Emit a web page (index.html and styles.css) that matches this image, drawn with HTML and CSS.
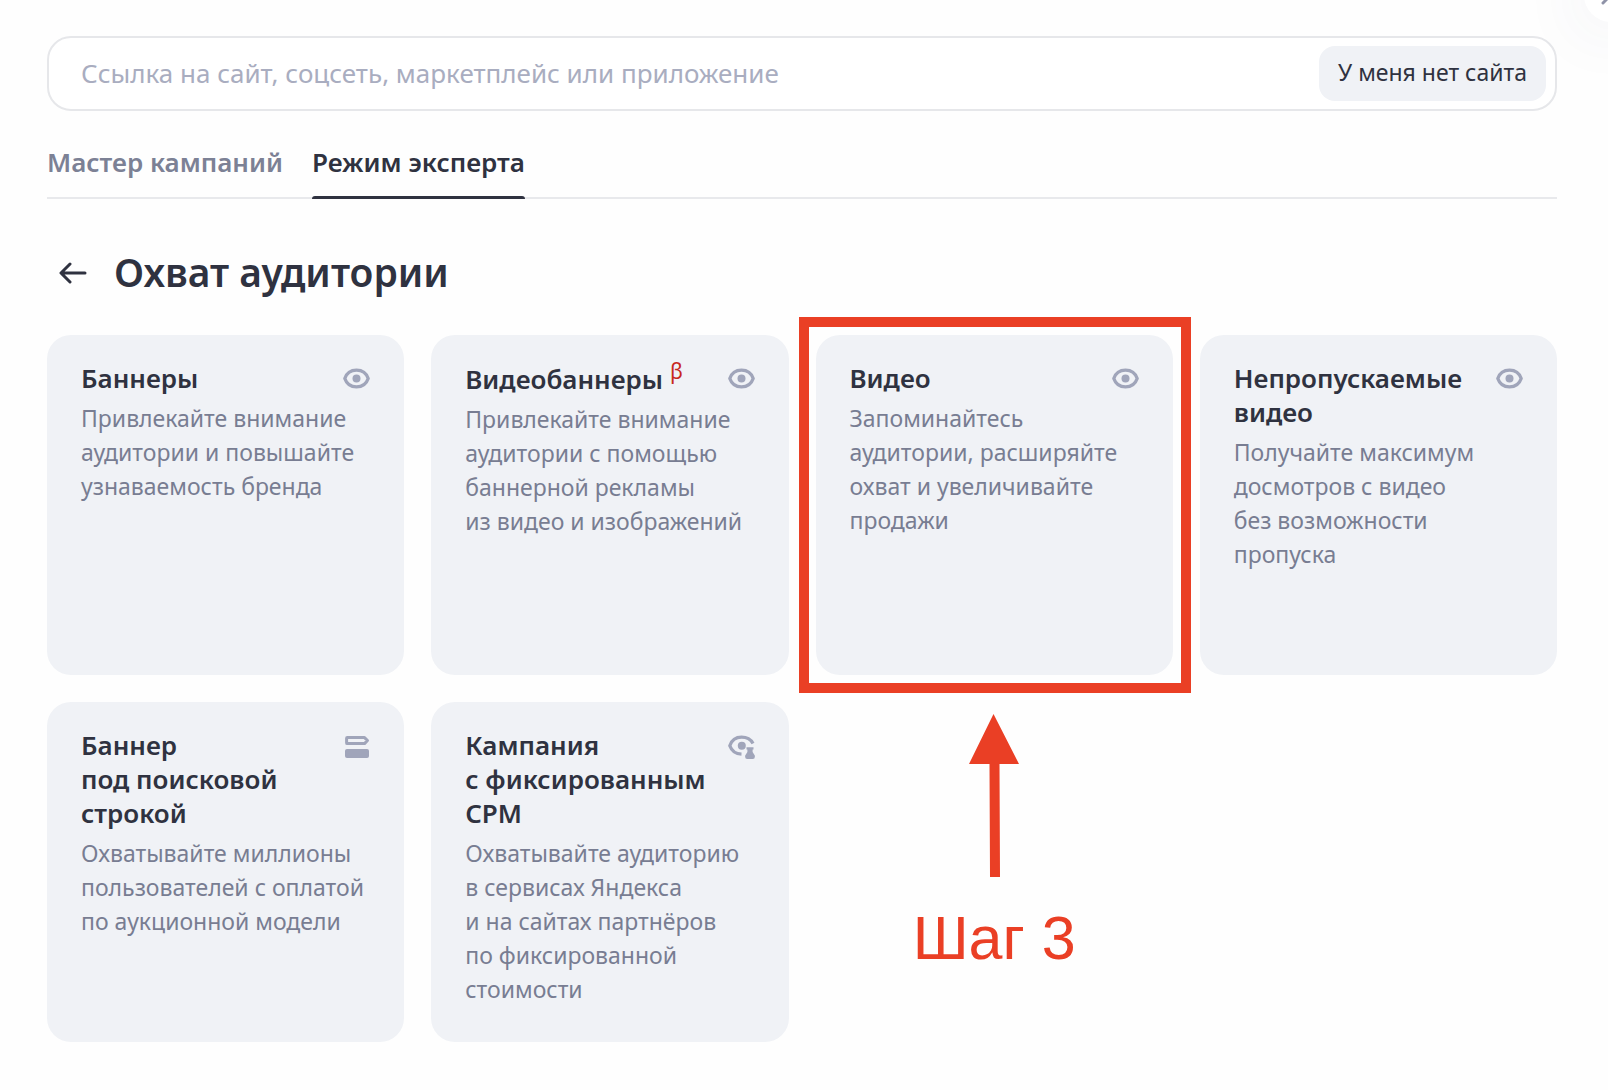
FILE: index.html
```html
<!DOCTYPE html>
<html lang="ru">
<head>
<meta charset="utf-8">
<meta name="viewport" content="width=device-width, initial-scale=1">
<title>Охват аудитории</title>
<link rel="stylesheet" href="styles.css">
</head>
<body>
<svg class="sprite" aria-hidden="true">
  <symbol id="eye" viewBox="0 0 27 21">
    <path d="M13.500 2.100C7.800 2.100 3.600 5.200 1.800 10.500C3.600 15.800 7.800 18.900 13.500 18.900S23.400 15.800 25.200 10.500C23.400 5.200 19.200 2.100 13.500 2.100Z" fill="none" stroke="currentColor" stroke-width="3.300" stroke-linejoin="round"/>
    <circle cx="13.500" cy="10.500" r="4" fill="currentColor"/>
  </symbol>
</svg>
<div class="page">
  <button class="close" type="button" aria-label="Закрыть">
    <svg width="20" height="20" viewBox="0 0 20 20"><path d="M2 2l16 16M18 2L2 18" fill="none" stroke="currentColor" stroke-width="3" stroke-linecap="round"/></svg>
  </button>
  <main class="content">
    <form class="search">
      <input class="search-input" type="text" aria-label="Ссылка" placeholder="Ссылка на сайт, соцсеть, маркетплейс или приложение">
      <button class="search-button" type="button">У меня нет сайта</button>
    </form>
    <nav class="tabs">
      <a class="tab" href="#wizard">Мастер кампаний</a>
      <a class="tab tab-active" href="#expert" aria-current="page">Режим эксперта</a>
    </nav>
    <header class="heading">
      <button class="back" type="button" aria-label="Назад">
        <svg width="28" height="22" viewBox="0 0 28 22"><path d="M26 11H2.500M11 2L2 11l9 9" fill="none" stroke="currentColor" stroke-width="3" stroke-linecap="round" stroke-linejoin="round"/></svg>
      </button>
      <h1 class="heading-title">Охват аудитории</h1>
    </header>
    <section class="cards">
      <article class="card">
        <svg class="card-icon"><use href="#eye"/></svg>
        <h2 class="card-title">Баннеры</h2>
        <p class="card-text">Привлекайте внимание<br>аудитории и повышайте<br>узнаваемость бренда</p>
      </article>
      <article class="card">
        <svg class="card-icon"><use href="#eye"/></svg>
        <h2 class="card-title">Видеобаннеры <sup class="beta">β</sup></h2>
        <p class="card-text">Привлекайте внимание<br>аудитории с помощью<br>баннерной рекламы<br>из видео и изображений</p>
      </article>
      <article class="card card-marked">
        <svg class="card-icon"><use href="#eye"/></svg>
        <h2 class="card-title">Видео</h2>
        <p class="card-text">Запоминайтесь<br>аудитории, расширяйте<br>охват и увеличивайте<br>продажи</p>
      </article>
      <article class="card">
        <svg class="card-icon"><use href="#eye"/></svg>
        <h2 class="card-title">Непропускаемые<br>видео</h2>
        <p class="card-text">Получайте максимум<br>досмотров с видео<br>без возможности<br>пропуска</p>
      </article>
      <article class="card">
        <svg class="card-icon" viewBox="0 0 27 24">
          <path d="M4.300 2.600H21.500L24.500 5.500L21.500 8.600H4.300A.7.7 0 0 1 3.600 7.900V3.300A.7.7 0 0 1 4.300 2.600Z" fill="none" stroke="currentColor" stroke-width="3" stroke-linejoin="round"/>
          <rect x="2" y="14" width="24" height="9" rx="2" fill="currentColor"/>
        </svg>
        <h2 class="card-title">Баннер<br>под поисковой<br>строкой</h2>
        <p class="card-text">Охватывайте миллионы<br>пользователей с оплатой<br>по аукционной модели</p>
      </article>
      <article class="card">
        <svg class="card-icon" viewBox="0 0 27 24">
          <path d="M25 8.500C22.800 4.500 18.600 2.200 13.500 2.200C7.800 2.200 3.600 5.600 1.800 10.700C3.600 15.600 7.400 18.900 13.500 19.200" fill="none" stroke="currentColor" stroke-width="3.300" stroke-linejoin="round"/>
          <circle cx="13.800" cy="10.800" r="4" fill="currentColor"/>
          <path d="M18.500 12.200H25.500V14.500H24.600V17L26.800 20.600Q27.300 24 24.800 24H19.200Q16.700 24 17.200 20.600L19.400 17V14.500H18.500Z" fill="currentColor"/>
        </svg>
        <h2 class="card-title">Кампания<br>с фиксированным<br>CPM</h2>
        <p class="card-text">Охватывайте аудиторию<br>в сервисах Яндекса<br>и на сайтах партнёров<br>по фиксированной<br>стоимости</p>
      </article>
      <aside class="step">
        <svg width="50" height="163" viewBox="0 0 50 163"><path d="M24.500 0L50 50H30.500L31 163H21L20.500 50H0Z" fill="currentColor"/></svg>
        <p class="step-text">Шаг 3</p>
      </aside>
    </section>
  </main>
</div>
</body>
</html>
```
FILE: styles.css
```css
* {
  box-sizing: border-box;
}

body {
  margin: 0;
  background: #fefefe;
  color: #2f3240;
  font-family: "Noto Sans", "Open Sans", sans-serif;
}

h1,
h2,
p {
  margin: 0;
}

button {
  border: 0;
  padding: 0;
  color: inherit;
  font: inherit;
}

.sprite {
  position: absolute;
  width: 0;
  height: 0;
}

.page {
  position: relative;
  overflow: hidden;
  min-height: 100vh;
}

.close {
  position: absolute;
  top: -32px;
  right: -30px;
  display: grid;
  place-items: center;
  width: 54px;
  height: 54px;
  border-radius: 50%;
  background: #fff;
  color: #8f93a8;
  box-shadow: 0 4px 70px rgba(60, 65, 110, 0.1);
}

.content {
  padding: 36px 51px 48px 47px;
}

.search {
  display: flex;
  align-items: center;
  padding: 8px 9px 8px 32px;
  border: 2px solid #e6e7ea;
  border-radius: 24px;
  background: #fff;
}

.search-input {
  flex: 1;
  min-width: 0;
  height: 55px;
  padding: 0 0 2px;
  border: 0;
  outline: 0;
  background: none;
  color: inherit;
  font: inherit;
  font-size: 26px;
}

.search-input::placeholder {
  color: #a9adc0;
  opacity: 1;
}

.search-button {
  height: 55px;
  padding: 0 19px 4px;
  border-radius: 16px;
  background: #f0f2f6;
  font-size: 23px;
}

.tabs {
  display: flex;
  gap: 29px;
  margin-top: 34px;
  border-bottom: 2px solid #e8e9ec;
}

.tab {
  position: relative;
  margin-bottom: -2px;
  padding-bottom: 20px;
  color: #7c8195;
  font-size: 26px;
  font-weight: 600;
  line-height: 34px;
  text-decoration: none;
}

.tab-active {
  color: #2f3240;
}

.tab-active::after {
  content: "";
  position: absolute;
  right: 0;
  bottom: 0;
  left: 0;
  height: 3px;
  border-radius: 3px 3px 0 0;
  background: #2f3240;
}

.heading {
  display: flex;
  align-items: center;
  gap: 27px;
  margin: 48px 0 36px 12px;
}

.back {
  display: grid;
  background: none;
}

.heading-title {
  padding-bottom: 2px;
  font-size: 39px;
  font-weight: 600;
  line-height: 50px;
}

.cards {
  display: grid;
  grid-template-columns: repeat(4, minmax(0, 1fr));
  grid-auto-rows: minmax(340px, auto);
  gap: 27px;
}

.card {
  position: relative;
  padding: 26px 34px;
  border-radius: 24px;
  background: #f0f2f6;
}

.card-marked::after {
  content: "";
  position: absolute;
  inset: -18px -18px -18px -17px;
  border: 10px solid #ea3f25;
}

.card-icon {
  float: right;
  width: 27px;
  height: 21px;
  margin-top: 7px;
  color: #a0a5ba;
}

.card-icon[viewBox] {
  height: 24px;
}

.card-title {
  font-size: 26px;
  font-weight: 600;
  line-height: 34px;
  white-space: nowrap;
}

.beta {
  color: #c8281e;
  font-size: 21px;
  font-weight: 400;
  line-height: 20px;
}

.card-text {
  margin-top: 6px;
  color: #787d92;
  font-size: 23px;
  line-height: 34px;
  white-space: nowrap;
}

.step {
  display: flex;
  flex-direction: column;
  align-items: center;
  padding-top: 12px;
  color: #ea3f25;
}

.step-text {
  margin-top: 26px;
  font-family: "Liberation Sans", Arial, sans-serif;
  font-size: 61px;
  line-height: 70px;
}
```
